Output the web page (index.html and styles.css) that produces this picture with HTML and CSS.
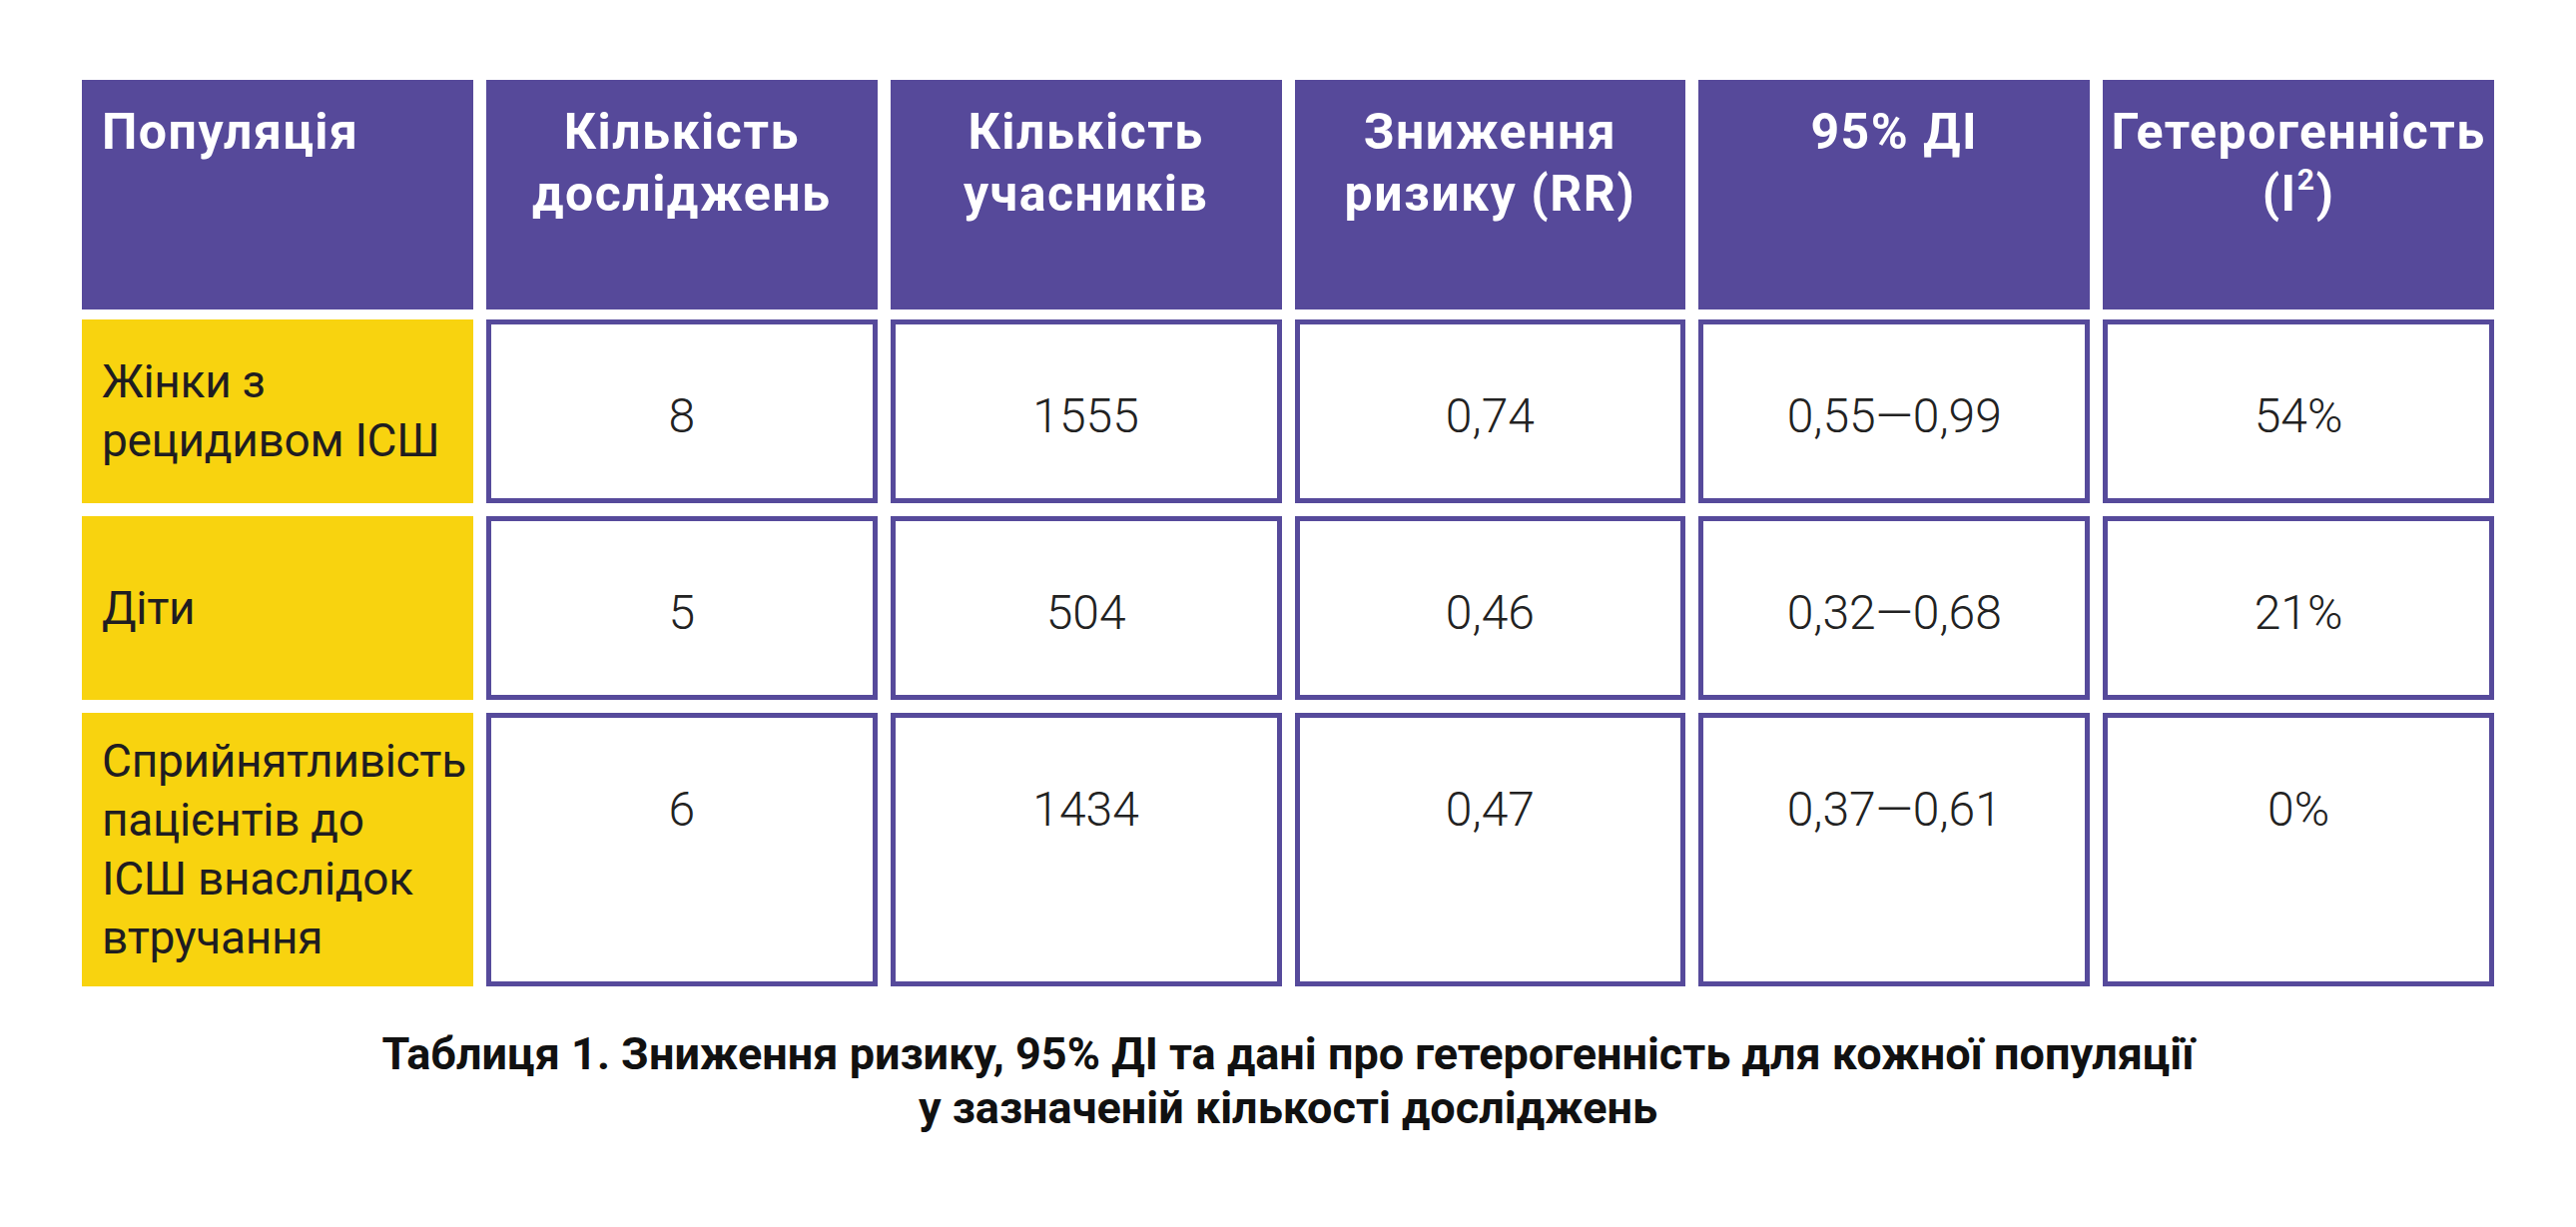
FILE: index.html
```html
<!DOCTYPE html>
<html lang="uk">
<head>
<meta charset="utf-8">
<title>Таблиця 1</title>
<link rel="stylesheet" href="styles.css">
</head>
<body>
<main class="page">
  <div class="table">
    <div class="head-row">
      <div class="hcell hcell-left">Популяція</div>
      <div class="hcell">Кількість<br>досліджень</div>
      <div class="hcell">Кількість<br>учасників</div>
      <div class="hcell">Зниження<br>ризику (RR)</div>
      <div class="hcell">95% ДІ</div>
      <div class="hcell">Гетерогенність<br>(I<sup class="sup">2</sup>)</div>
    </div>
    <div class="body-rows">
      <div class="pcell">Жінки з<br>рецидивом ІСШ</div>
      <div class="vcell">8</div>
      <div class="vcell">1555</div>
      <div class="vcell">0,74</div>
      <div class="vcell">0,55—0,99</div>
      <div class="vcell">54%</div>

      <div class="pcell">Діти</div>
      <div class="vcell">5</div>
      <div class="vcell">504</div>
      <div class="vcell">0,46</div>
      <div class="vcell">0,32—0,68</div>
      <div class="vcell">21%</div>

      <div class="pcell">Сприйнятливість<br>пацієнтів до<br>ІСШ внаслідок<br>втручання</div>
      <div class="vcell">6</div>
      <div class="vcell">1434</div>
      <div class="vcell">0,47</div>
      <div class="vcell">0,37—0,61</div>
      <div class="vcell">0%</div>
    </div>
  </div>
  <p class="caption">Таблиця 1. Зниження ризику, 95% ДІ та дані про гетерогенність для кожної популяції<br>у зазначеній кількості досліджень</p>
</main>
</body>
</html>
```

FILE: styles.css
```css
html, body {
  margin: 0;
  padding: 0;
  background: #ffffff;
}

body {
  font-family: Roboto, "Liberation Sans", "Noto Sans", sans-serif;
  color: #1f1d21;
}

.page {
  padding: 80px 82px 0;
}

.table {
  display: flex;
  flex-direction: column;
  gap: 10px;
}

.head-row,
.body-rows {
  display: grid;
  grid-template-columns: repeat(6, 1fr);
  column-gap: 13px;
}

.body-rows {
  row-gap: 13px;
  grid-auto-rows: minmax(184px, auto);
}

.hcell {
  background: #56499a;
  color: #ffffff;
  font-weight: 700;
  font-size: 50px;
  line-height: 62px;
  letter-spacing: 1.5px;
  height: 230px;
  box-sizing: border-box;
  padding: 21px 4px 0;
  text-align: center;
}

.hcell-left {
  text-align: left;
  padding-left: 20px;
}

.sup {
  font-size: 0.6em;
  line-height: 0;
  vertical-align: 0.7em;
}

.pcell {
  background: #f8d30f;
  font-size: 46px;
  line-height: 59px;
  font-weight: 400;
  letter-spacing: -0.3px;
  padding: 19px 4px 19px 20px;
  display: flex;
  align-items: center;
  color: #1f1d21;
}

.vcell {
  border: 5px solid #564a9b;
  background: #ffffff;
  font-size: 48px;
  line-height: 59px;
  font-weight: 300;
  text-align: center;
  padding-top: 62px;
  color: #222222;
}

.caption {
  margin: 41px 0 0;
  text-align: center;
  font-size: 45px;
  line-height: 54px;
  font-weight: 700;
  color: #111111;
}
```
